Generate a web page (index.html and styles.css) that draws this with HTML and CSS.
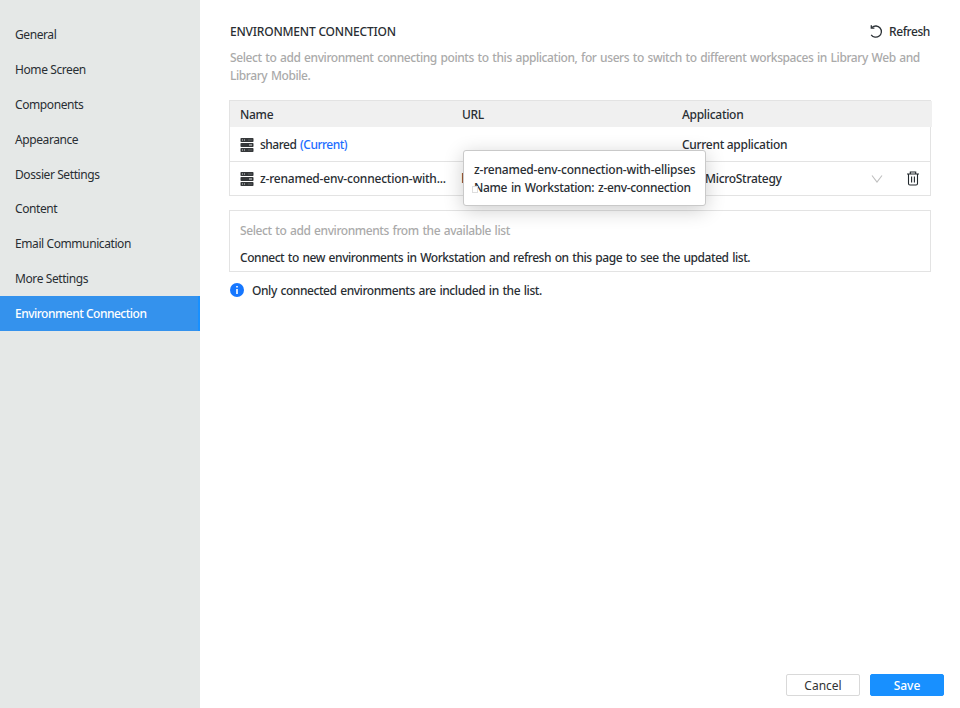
FILE: index.html
```html
<!DOCTYPE html>
<html lang="en">
<head>
<meta charset="utf-8">
<title>Environment Connection</title>
<link rel="stylesheet" href="styles.css">
</head>
<body>
<svg class="defs" aria-hidden="true">
  <symbol id="server" viewBox="0 0 14 14">
    <rect x="0.5" y="0" width="13" height="4" rx="0.8" fill="#35383a"/>
    <rect x="0.5" y="5" width="13" height="4" rx="0.8" fill="#35383a"/>
    <rect x="0.5" y="10" width="13" height="4" rx="0.8" fill="#35383a"/>
    <path d="M2 2h1M4 2h1M2 12h1M4 12h1M9 7h3" stroke="#d8dada" stroke-width="1"/>
    <path d="M8 2h4M8 12h4" stroke="#777b7d" stroke-width="0.6"/>
  </symbol>
</svg>
<div class="app">
  <nav class="sidebar">
    <a class="item">General</a>
    <a class="item">Home Screen</a>
    <a class="item">Components</a>
    <a class="item">Appearance</a>
    <a class="item">Dossier Settings</a>
    <a class="item">Content</a>
    <a class="item">Email Communication</a>
    <a class="item">More Settings</a>
    <a class="item active">Environment Connection</a>
  </nav>
  <main class="main">
    <header class="head">
      <h1 class="title">ENVIRONMENT CONNECTION</h1>
      <div class="refresh">
        <svg width="14" height="14" viewBox="0 0 14 14" fill="none" stroke="#2b3136" stroke-width="1.3"><path d="M3 2.5A5.6 5.6 0 1 1 2.2 9.8"/><path d="M2.3 0.3V3.2H5.4"/></svg>
        <span>Refresh</span>
      </div>
    </header>
    <p class="desc">Select to add environment connecting points to this application, for users to switch to different workspaces in Library Web and<br>Library Mobile.</p>
    <section class="table">
      <div class="row thead"><span>Name</span><span>URL</span><span>Application</span></div>
      <div class="row">
        <span class="name"><svg width="14" height="14"><use href="#server"/></svg><span class="shared">shared <span class="current">(Current)</span></span></span>
        <span></span>
        <span class="app-name">Current application</span>
      </div>
      <div class="row last">
        <span class="name"><svg width="14" height="14"><use href="#server"/></svg><span class="long">z-renamed-env-connection-with...</span></span>
        <span class="url">h</span>
        <span class="select"><span class="strategy">MicroStrategy</span>
          <svg width="12" height="8" viewBox="0 0 12 8" fill="none" stroke="#bfbfbf" stroke-width="1.1"><path d="M1 0.5L6 7L11 0.5"/></svg></span>
        <svg class="trash" width="12" height="15" viewBox="0 0 12 15" fill="none" stroke="#22282d" stroke-width="1.1"><path d="M0 3H12M3.3 3V1H8.7V3M1.5 3V12.6Q1.5 14 2.9 14H9.1Q10.5 14 10.5 12.6V3M4.6 5.5V11.5M7.4 5.5V11.5"/></svg>
      </div>
      <div class="tooltip">
        <div class="tip-a">z-renamed-env-connection-with-ellipses</div>
        <div class="tip-b">Name in Workstation: z-env-connection</div>
        <i class="pointer"></i>
      </div>
    </section>
    <section class="picker">
      <div class="placeholder">Select to add environments from the available list</div>
      <div class="connect">Connect to new environments in Workstation and refresh on this page to see the updated list.</div>
    </section>
    <div class="note">
      <svg width="14" height="14" viewBox="0 0 14 14"><circle cx="7" cy="7" r="7" fill="#1677ff"/><path d="M7 6V11M7 3V4.6" stroke="#fff" stroke-width="1.6"/></svg>
      <span>Only connected environments are included in the list.</span>
    </div>
    <footer class="actions"><button class="btn">Cancel</button><button class="btn primary">Save</button></footer>
  </main>
</div>
</body>
</html>
```
FILE: styles.css
```css
* { box-sizing: border-box; }
body { margin: 0; font: 500 12px/18px "Noto Sans", "Open Sans", sans-serif; letter-spacing: -0.3px; color: #292e33; background: #fff; }
.defs { position: absolute; width: 0; height: 0; }
.app { display: flex; height: 708px; }
.sidebar { width: 200px; flex: none; background: #e5e8e7; padding-top: 17.2px; }
.item { display: block; height: 34.85px; line-height: 35px; padding-left: 15px; font-weight: 400; letter-spacing: -0.41px; white-space: nowrap; }
.item.active { background: #3492ed; color: #fff; font-weight: 500; letter-spacing: -0.5px; border-right: 2px solid #1890ff; }
.main { flex: 1; min-width: 0; display: flex; flex-direction: column; padding: 23px 16px 12px 29px; white-space: nowrap; }
.head { display: flex; justify-content: space-between; align-items: center; height: 18px; padding: 0 14px 0 1px; }
.title { margin: 0; font-size: 12px; font-weight: 500; letter-spacing: -0.2px; }
.refresh { display: flex; align-items: center; gap: 6px; letter-spacing: -0.4px; }
.desc { margin: 8px 0 0 1px; height: 36px; color: #aaa; letter-spacing: -0.42px; word-spacing: 0.95px; }
.table { position: relative; width: 702px; margin-top: 15px; border: 1px solid #e3e3e3; }
.row { display: grid; grid-template-columns: 222px 220px 221px 1fr; align-items: center; height: 34px; padding-left: 10px; border-top: 1px solid #e3e3e3; }
.thead { height: 26px; padding-top: 2px; background: #f0f0f0; border: 0; margin-right: -2px; }
.thead + .row { border-top-color: transparent; }
.name { display: flex; align-items: center; gap: 6px; }
.shared { letter-spacing: -0.5px; word-spacing: 1px; }
.long { letter-spacing: -0.2px; }
.current { color: #1c6dff; }
.url { margin-left: -0.7px; }
.select { display: flex; align-items: center; justify-content: space-between; padding: 0 20px 0 23px; }
.trash { margin-left: 4px; }
.tooltip { position: absolute; left: 233px; top: 49px; width: 243px; height: 56px; padding: 10px; background: #fff; border: 1px solid #c9c9c9; border-radius: 3px; box-shadow: 0 4px 20px rgba(0,0,0,.2); }
.tip-a { letter-spacing: -0.2px; }
.tip-b { letter-spacing: -0.33px; word-spacing: 1px; }
.pointer { position: absolute; left: 8px; top: 35px; width: 6px; height: 7px; border: 1px solid #ddd; background: #fff; }
.picker { width: 702px; height: 62px; margin-top: 14px; padding: 11px 10px; border: 1px solid #e3e3e3; }
.placeholder { color: #aaa; letter-spacing: -0.42px; word-spacing: 0.95px; }
.connect { margin-top: 9px; letter-spacing: -0.45px; word-spacing: 0.95px; }
.note { display: flex; align-items: flex-start; gap: 8px; margin: 10px 0 0 1px; letter-spacing: -0.43px; word-spacing: 0.95px; }
.note svg { margin-top: 1px; }
.actions { margin-top: auto; display: flex; justify-content: flex-end; gap: 10px; }
.btn { width: 74px; height: 22px; padding: 1px 0 0; font: 400 12px/19px "Noto Sans", sans-serif; color: #333; background: #fff; border: 1px solid #d9d9d9; border-radius: 2px; }
.btn.primary { color: #fff; background: #1890ff; border-color: #1890ff; font-weight: 500; }
```
